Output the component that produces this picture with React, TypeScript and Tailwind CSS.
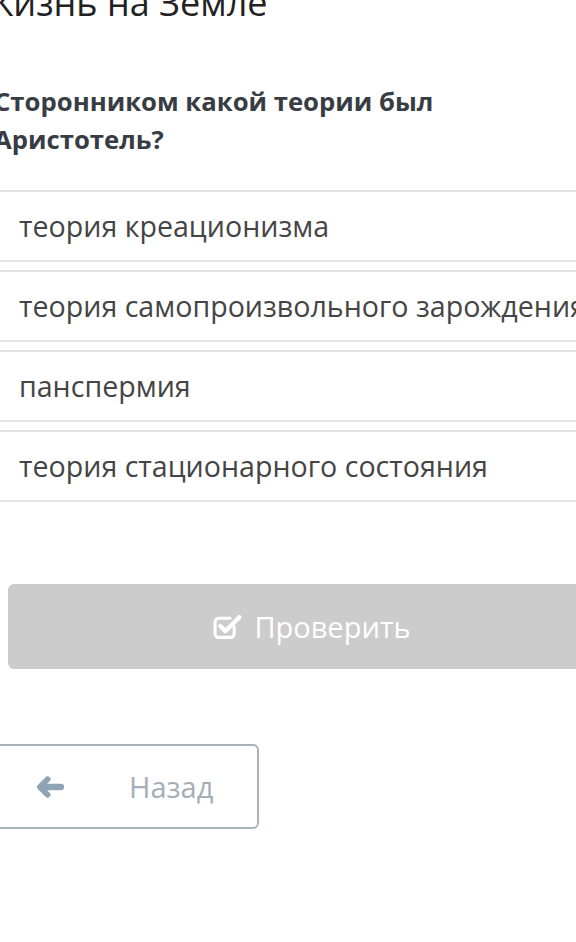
import React from 'react';

const OPTIONS = [
  'теория креационизма',
  'теория самопроизвольного зарождения',
  'панспермия',
  'теория стационарного состояния',
];

function CheckSquareIcon() {
  return (
    <svg width="30" height="30" viewBox="0 0 29 29" fill="none" className="shrink-0">
      <path
        d="M20.5 14.5v6.5a3.5 3.5 0 0 1-3.5 3.5h-11.5A3.5 3.5 0 0 1 2 21v-11.5A3.5 3.5 0 0 1 5.5 6h11"
        stroke="white"
        strokeWidth="3"
        strokeLinecap="round"
      />
      <path d="M7 13.5l5 5L25.5 5" stroke="white" strokeWidth="4.2" strokeLinecap="round" strokeLinejoin="round" />
    </svg>
  );
}

function ArrowLeftIcon() {
  return (
    <svg width="27" height="22" viewBox="0 0 28 22" fill="none" className="shrink-0">
      <path d="M11 3L3 11l8 8" stroke="#8ea4b4" strokeWidth="6" strokeLinecap="round" strokeLinejoin="round" />
      <path d="M5 11h20" stroke="#8ea4b4" strokeWidth="6.5" strokeLinecap="round" />
    </svg>
  );
}

export default function App() {
  return (
    <div className="w-[576px] h-[942px] overflow-hidden bg-white font-['Open_Sans',sans-serif]">
      <div className="ml-[-20px] w-[636px] flex flex-col">
        {/* Topic title */}
        <h1 className="mt-[-16px] pl-[3px] text-[36px] leading-[38px] font-normal text-[#222222] whitespace-nowrap">
          Жизнь на Земле
        </h1>

        {/* Question */}
        <h2 className="mt-[61px] pl-[14px] pr-[120px] text-[25.7px] leading-[38px] font-bold text-[#383c43]">
          Сторонником какой теории был Аристотель?
        </h2>

        {/* Answer options */}
        <div className="mt-[31px] flex flex-col gap-[8px]">
          {OPTIONS.map((text, i) => (
            <div
              key={i}
              className="h-[72px] flex items-center border-y-2 border-[#e3e3e3] pl-[39px] text-[28.6px] text-[#454545] whitespace-nowrap"
            >
              {text}
            </div>
          ))}
        </div>

        {/* Check button */}
        <button className="mt-[82px] ml-[28px] h-[85px] rounded-[6px] bg-[#cccccc] flex items-center justify-center gap-[11px] text-white text-[29px]">
          <CheckSquareIcon />
          <span>Проверить</span>
        </button>

        {/* Back button */}
        <button className="mt-[75px] w-[279px] h-[85px] rounded-[6px] border-2 border-[#a7b2b9] flex items-center pl-[55px] text-[29px] text-[#a3aeb7]">
          <ArrowLeftIcon />
          <span className="ml-[65px]">Назад</span>
        </button>
      </div>
    </div>
  );
}
